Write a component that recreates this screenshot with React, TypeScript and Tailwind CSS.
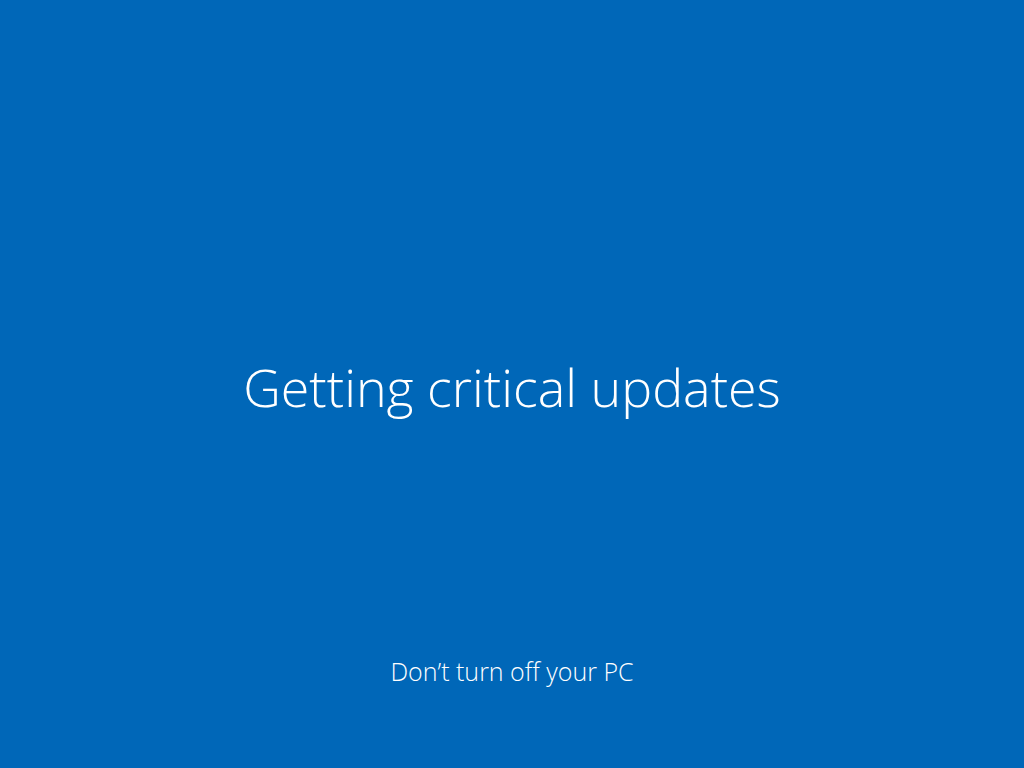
export default function App() {
  return (
    <div
      className="h-[768px] w-[1024px] bg-[#0067b8] text-white flex flex-col items-center font-light"
      style={{ fontFamily: '"Open Sans", "Noto Sans", sans-serif' }}
    >
      <div className="pt-[355px] h-[655px]">
        <h1 className="text-[52px] leading-[64px] font-light">Getting critical updates</h1>
      </div>
      <p className="text-[25px] leading-[32px] font-light">Don’t turn off your PC</p>
    </div>
  );
}
